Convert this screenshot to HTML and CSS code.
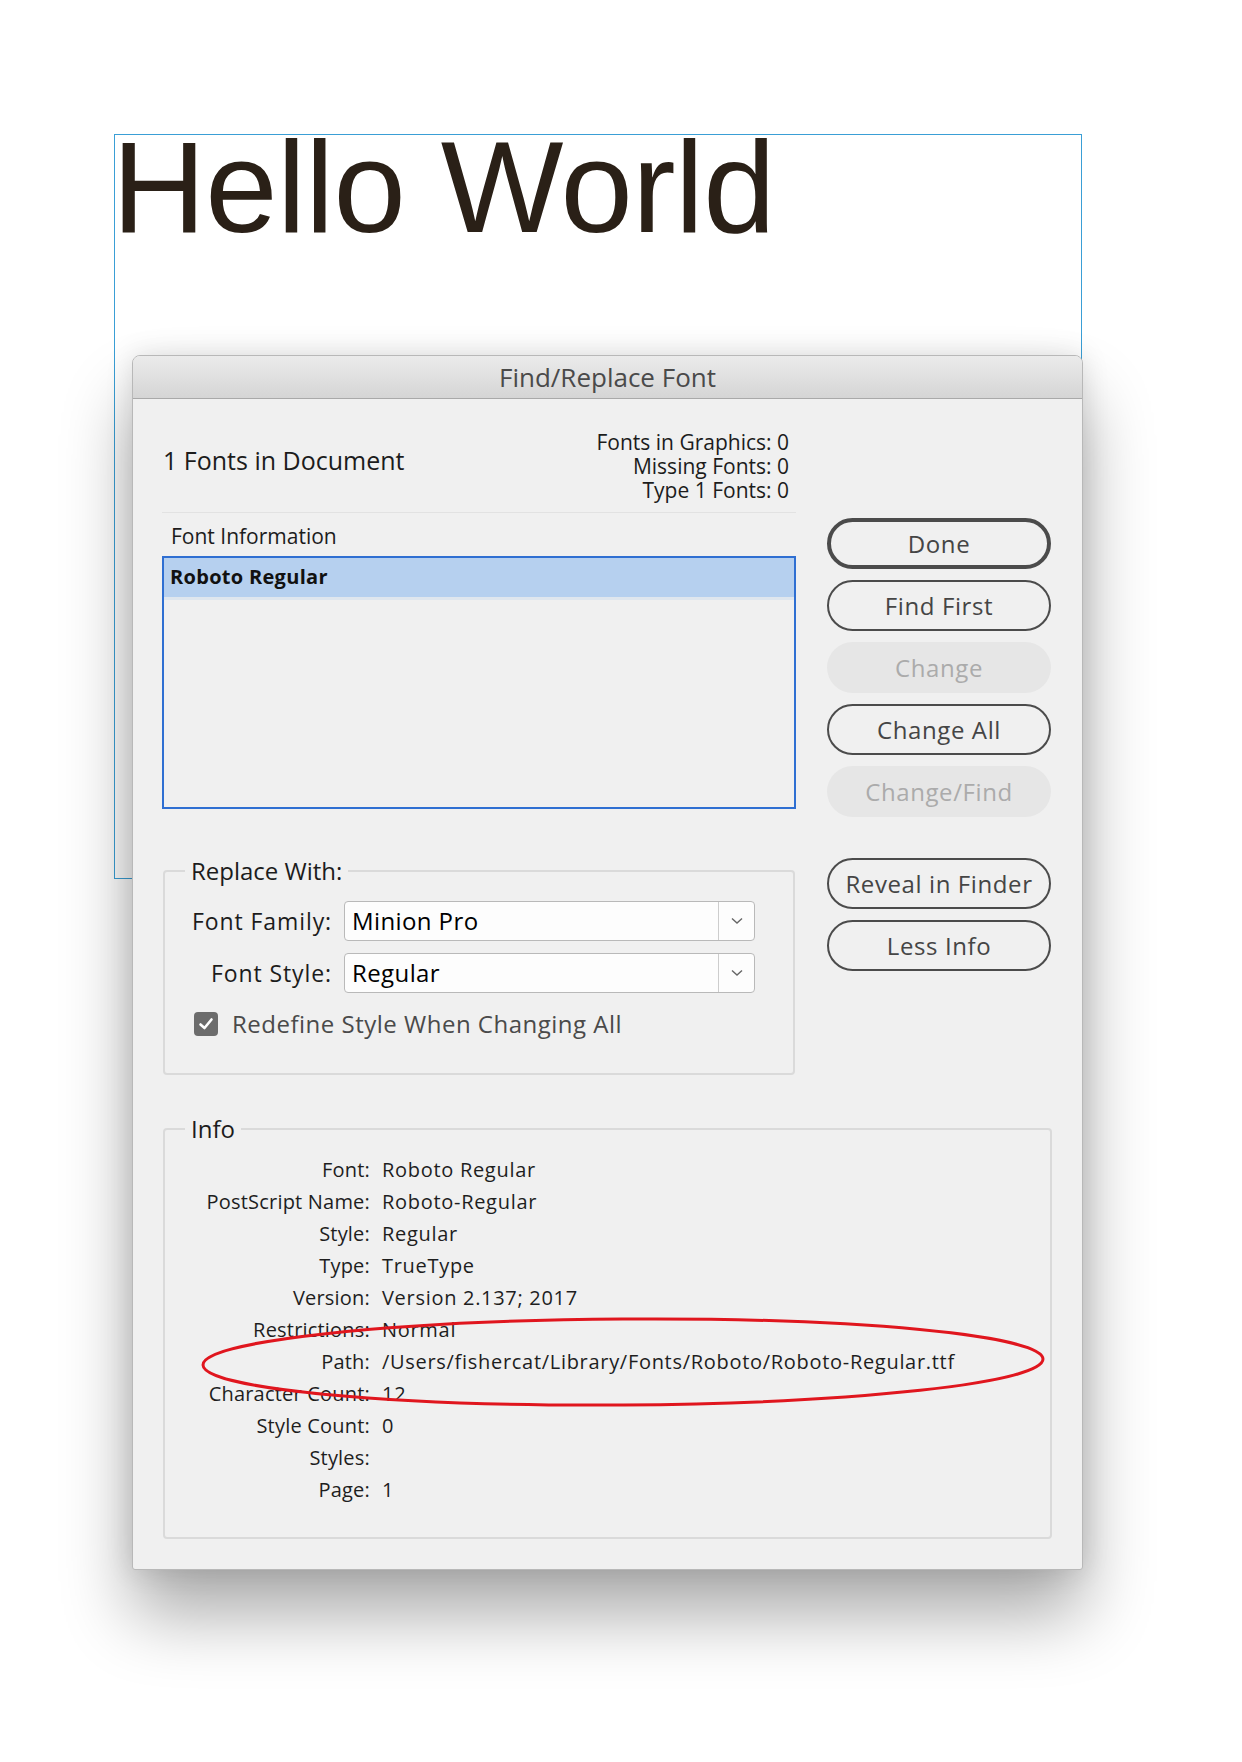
FILE: index.html
```html
<!DOCTYPE html>
<html lang="en">

<head>
    <meta charset="UTF-8">
    <title>Find/Replace Font</title>
    <link rel="stylesheet" href="styles.css">
</head>

<body>
    <div class="desk">
        <div class="frame">
            <div class="headline">Hello World</div>
        </div>

        <div class="dialog">
            <div class="titlebar">Find/Replace Font</div>

            <div class="dialog-body">
                <div class="main">
                    <div class="left-col">
                        <div class="summary">
                            <div class="doc-count">1 Fonts in Document</div>
                            <div class="stats">
                                <div>Fonts in Graphics: 0</div>
                                <div>Missing Fonts: 0</div>
                                <div>Type 1 Fonts: 0</div>
                            </div>
                        </div>

                        <div class="list-title">Font Information</div>
                        <div class="font-list">
                            <div class="font-row selected">Roboto Regular</div>
                        </div>

                        <fieldset class="group replace">
                            <legend>Replace With:</legend>
                            <div class="form-grid">
                                <label>Font Family:</label>
                                <div class="select">
                                    <span class="select-value">Minion Pro</span>
                                    <span class="arrow">
                                        <svg width="12" height="8" viewBox="0 0 12 8"><polyline points="1,1.5 6,6 11,1.5" fill="none" stroke="#666" stroke-width="1.4"/></svg>
                                    </span>
                                </div>
                                <label>Font Style:</label>
                                <div class="select">
                                    <span class="select-value">Regular</span>
                                    <span class="arrow">
                                        <svg width="12" height="8" viewBox="0 0 12 8"><polyline points="1,1.5 6,6 11,1.5" fill="none" stroke="#666" stroke-width="1.4"/></svg>
                                    </span>
                                </div>
                            </div>
                            <div class="check-row">
                                <span class="checkbox">
                                    <svg width="16" height="14" viewBox="0 0 16 14"><polyline points="2.5,7.5 6.5,11 13.5,2.5" fill="none" stroke="#fff" stroke-width="2.6" stroke-linecap="round" stroke-linejoin="round"/></svg>
                                </span>
                                Redefine Style When Changing All
                            </div>
                        </fieldset>
                    </div>

                    <div class="buttons">
                        <div class="btn default">Done</div>
                        <div class="btn">Find First</div>
                        <div class="btn disabled">Change</div>
                        <div class="btn">Change All</div>
                        <div class="btn disabled">Change/Find</div>
                        <div class="btn spaced">Reveal in Finder</div>
                        <div class="btn">Less Info</div>
                    </div>
                </div>

                <fieldset class="group info">
                    <legend>Info</legend>
                    <div class="info-grid">
                        <span class="key">Font:</span><span>Roboto Regular</span>
                        <span class="key">PostScript Name:</span><span>Roboto-Regular</span>
                        <span class="key">Style:</span><span>Regular</span>
                        <span class="key">Type:</span><span>TrueType</span>
                        <span class="key">Version:</span><span>Version 2.137; 2017</span>
                        <span class="key">Restrictions:</span><span>Normal</span>
                        <span class="key">Path:</span><span>/Users/fishercat/Library/Fonts/Roboto/Roboto-Regular.ttf</span>
                        <span class="key">Character Count:</span><span>12</span>
                        <span class="key">Style Count:</span><span>0</span>
                        <span class="key">Styles:</span><span></span>
                        <span class="key">Page:</span><span>1</span>

                        <svg class="mark" width="850" height="96" viewBox="0 0 850 96">
                            <ellipse cx="425" cy="48" rx="420" ry="43" fill="none" stroke="#e0161e" stroke-width="3" transform="rotate(-0.4 425 48)"/>
                        </svg>
                    </div>
                </fieldset>
            </div>
        </div>
    </div>
</body>

</html>
```

FILE: styles.css
```css
* {
    margin: 0;
    padding: 0;
    box-sizing: border-box;
}

body {
    background-color: #fff;
    font-family: "Open Sans", "Noto Sans", sans-serif;
    color: #222;
}

.desk {
    position: relative;
    width: 1242px;
    height: 1762px;
    overflow: hidden;
}

.frame {
    margin: 134px 0 0 114px;
    width: 968px;
    height: 745px;
    border: 1px solid #3a9fd6;
    overflow: hidden;
}

.headline {
    font-family: "Liberation Sans", Arial, sans-serif;
    font-size: 130px;
    line-height: 130px;
    letter-spacing: -0.6px;
    color: #2a2017;
    margin: -13px 0 0 -3px;
    white-space: nowrap;
}

/* the floating dialog window */
.dialog {
    position: absolute;
    left: 132px;
    top: 355px;
    width: 951px;
    background-color: #f0f0f0;
    border: 1px solid #b8b8b8;
    border-radius: 8px 8px 3px 3px;
    box-shadow: 0 45px 70px rgba(0, 0, 0, 0.33), 0 0 28px rgba(0, 0, 0, 0.12);
}

.titlebar {
    height: 43px;
    line-height: 43px;
    text-align: center;
    font-size: 26px;
    color: #4a4a4a;
    background: linear-gradient(#ebebeb, #d5d5d5);
    border-bottom: 1px solid #a9a9a9;
    border-radius: 7px 7px 0 0;
}

.dialog-body {
    padding: 31px 0 30px 29px;
}

.main {
    display: flex;
}

.left-col {
    width: 634px;
}

.summary {
    display: flex;
    justify-content: space-between;
    padding: 0 7px 10px 0;
    border-bottom: 1px solid #e2e2e2;
}

.doc-count {
    font-size: 25px;
    line-height: 30px;
    margin-top: 15px;
    padding-left: 1px;
    color: #1c1c1c;
}

.stats {
    text-align: right;
    font-size: 21px;
    line-height: 24px;
    color: #1c1c1c;
}

.list-title {
    font-size: 21px;
    line-height: 26px;
    margin-top: 10px;
    padding-left: 9px;
    color: #1c1c1c;
}

.font-list {
    margin-top: 7px;
    height: 253px;
    border: 2px solid #2f6fd2;
}

.font-row {
    height: 39px;
    line-height: 39px;
    padding-left: 6px;
    font-size: 20px;
    font-weight: bold;
    letter-spacing: 0.3px;
    color: #111;
}

.font-row.selected {
    background-color: #b6d0ef;
    border-bottom: 3px solid #dfe6ee;
    height: 42px;
    line-height: 38px;
}

/* group boxes */
.group {
    border: 2px solid #dadada;
    border-radius: 4px;
    min-width: 0;
}

.group legend {
    padding: 0 6px;
    font-size: 24px;
    line-height: 26px;
    color: #1c1c1c;
}

.replace {
    margin: 49px 0 0 1px;
    width: 632px;
    padding: 17px 38px 37px 20px;
}

.form-grid {
    display: grid;
    grid-template-columns: 147px 411px;
    column-gap: 12px;
    row-gap: 12px;
    align-items: center;
}

.form-grid label {
    text-align: right;
    font-size: 23px;
    letter-spacing: 0.9px;
    color: #1c1c1c;
}

.select {
    display: flex;
    height: 40px;
    background-color: #fdfdfd;
    border: 1px solid #b9b9b9;
    border-radius: 4px;
}

.select-value {
    flex: 1;
    padding-left: 7px;
    font-size: 24px;
    line-height: 38px;
    letter-spacing: 0.4px;
    color: #000;
}

.arrow {
    width: 36px;
    border-left: 1px solid #cdcdcd;
    display: flex;
    justify-content: center;
    align-items: center;
}

.check-row {
    display: flex;
    align-items: center;
    margin: 19px 0 0 9px;
    font-size: 24px;
    line-height: 24px;
    letter-spacing: 0.5px;
    color: #4a4a4a;
}

.checkbox {
    width: 24px;
    height: 24px;
    margin-right: 14px;
    border-radius: 4px;
    background-color: #6c6c6c;
    display: flex;
    justify-content: center;
    align-items: center;
}

/* button column */
.buttons {
    width: 224px;
    margin-left: 31px;
    padding-top: 88px;
}

.btn {
    height: 51px;
    margin-bottom: 11px;
    border: 2px solid #4b4b4b;
    border-radius: 26px;
    text-align: center;
    line-height: 47px;
    font-size: 24px;
    letter-spacing: 0.6px;
    color: #454545;
}

.btn.default {
    border-width: 4px;
    line-height: 43px;
}

.btn.disabled {
    border-color: transparent;
    background-color: #e6e6e6;
    color: #ababab;
}

.btn.spaced {
    margin-top: 41px;
}

/* info box */
.info {
    margin: 41px 0 0 1px;
    width: 889px;
    padding: 12px 20px 31px 20px;
}

.info-grid {
    position: relative;
    display: grid;
    grid-template-columns: 185px 1fr;
    column-gap: 12px;
    font-size: 20px;
    line-height: 32px;
    letter-spacing: 0.7px;
    color: #1e1e1e;
}

.info-grid span {
    white-space: nowrap;
}

.info-grid .key {
    text-align: right;
    letter-spacing: 0.2px;
}

.mark {
    position: absolute;
    left: 13px;
    top: 160px;
}
```
